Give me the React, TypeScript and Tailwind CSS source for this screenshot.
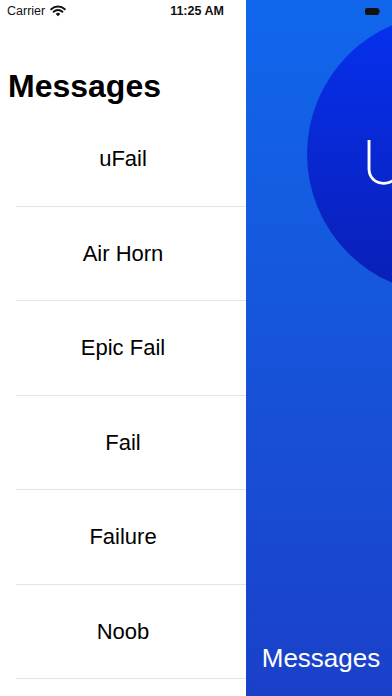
import React from "react";

const messages = ["uFail", "Air Horn", "Epic Fail", "Fail", "Failure", "Noob"];

const Wifi = () => (
  <svg width="16" height="12" viewBox="0 0 16 12" className="ml-[5px]">
    <path d="M8 11.2 L10.3 8.9 A3.3 3.3 0 0 0 5.7 8.9 Z" fill="#111" />
    <path d="M3.6 6.8 A6.3 6.3 0 0 1 12.4 6.8" stroke="#111" strokeWidth="1.9" fill="none" strokeLinecap="round" />
    <path d="M1.2 4.3 A9.8 9.8 0 0 1 14.8 4.3" stroke="#111" strokeWidth="1.9" fill="none" strokeLinecap="round" />
  </svg>
);

const StatusBar = () => (
  <div
    className="absolute top-0 inset-x-0 h-[22px] flex items-center text-[#111]"
    style={{ fontFamily: "'Liberation Sans', Arial, sans-serif" }}
  >
    <div className="flex items-center pl-[7px] w-[150px] text-[12.5px]">
      Carrier
      <Wifi />
    </div>
    <div className="flex-1 text-center text-[12.5px] font-bold pl-[2px]">11:25 AM</div>
    <div className="w-[150px] flex justify-end pr-[12px]">
      <div className="flex items-center">
        <div className="w-[14px] h-[7px] rounded-[2px] bg-[#111]" />
        <div className="w-[1px] h-[3px] bg-[#111] opacity-60" />
      </div>
    </div>
  </div>
);

export default function App() {
  return (
    <div
      className="relative w-[392px] h-[696px] overflow-hidden flex bg-white"
      style={{ fontFamily: "'Liberation Sans', Arial, sans-serif" }}
    >
      <div className="w-[246px] shrink-0 bg-white flex flex-col pt-[68px]">
        <div className="pl-[8px] text-[32px] leading-[36px] font-bold text-black mb-[8px]">Messages</div>
        <div className="flex flex-col">
          {messages.map((m) => (
            <div key={m} className="h-[94.5px] shrink-0 flex flex-col">
              <div className="flex-1 flex items-center justify-center text-[22px] text-black">{m}</div>
              <div className="ml-[16px] h-px bg-[#e4e4e8]" />
            </div>
          ))}
        </div>
      </div>

      <div className="relative flex-1 bg-gradient-to-b from-[#1067ec] to-[#1a40c9] flex flex-col justify-end items-center pb-[23px] overflow-hidden">
        <div className="absolute left-[61px] top-[14px] w-[280px] h-[280px] rounded-full bg-gradient-to-b from-[#0531ef] to-[#0a1fb5]">
          <div
            className="absolute left-[55px] top-[118px] text-[60px] leading-none font-extralight text-white"
            style={{ fontFamily: "Inter, 'Liberation Sans', sans-serif" }}
          >
            U
          </div>
        </div>
        <div className="relative text-[26px] leading-[30px] text-white pl-[4px]">Messages</div>
      </div>

      <StatusBar />
    </div>
  );
}
